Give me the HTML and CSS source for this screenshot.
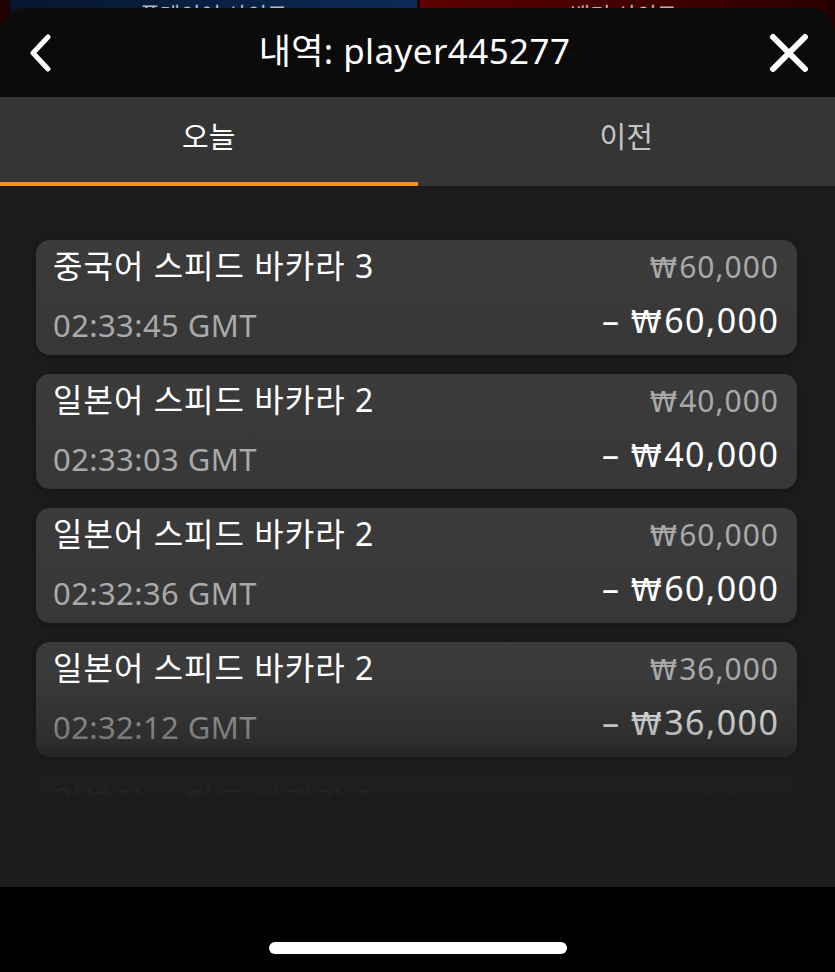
FILE: index.html
```html
<!DOCTYPE html>
<html lang="ko">
<head>
<meta charset="utf-8">
<title>내역</title>
<link rel="stylesheet" href="styles.css">
</head>
<body>
<div class="backdrop">
  <div class="panel panel-blue"><span>플레이어 사이드</span></div>
  <div class="panel panel-red"><span>뱅커 사이드</span></div>
</div>
<div class="modal">
  <header class="header">
    <button class="icon-btn" aria-label="뒤로">
      <svg width="24" height="38" viewBox="0 0 24 38"><path d="M20 3 L5 19 L20 35" fill="none" stroke="#fff" stroke-width="5" stroke-linecap="round" stroke-linejoin="round"/></svg>
    </button>
    <h1 class="title">내역: player445277</h1>
    <button class="icon-btn" aria-label="닫기">
      <svg width="40" height="40" viewBox="0 0 40 40"><path d="M4 4 L36 36 M36 4 L4 36" fill="none" stroke="#fff" stroke-width="6" stroke-linecap="round"/></svg>
    </button>
  </header>
  <nav class="tabs">
    <div class="tab tab-active">오늘</div>
    <div class="tab">이전</div>
  </nav>
  <section class="list">
    <div class="card">
      <div class="col">
        <div class="game">중국어 스피드 바카라 3</div>
        <div class="time">02:33:45 GMT</div>
      </div>
      <div class="col col-right">
        <div class="bet"><span class="won">₩</span>60,000</div>
        <div class="result">– <span class="won">₩</span>60,000</div>
      </div>
    </div>
    <div class="card">
      <div class="col">
        <div class="game">일본어 스피드 바카라 2</div>
        <div class="time">02:33:03 GMT</div>
      </div>
      <div class="col col-right">
        <div class="bet"><span class="won">₩</span>40,000</div>
        <div class="result">– <span class="won">₩</span>40,000</div>
      </div>
    </div>
    <div class="card">
      <div class="col">
        <div class="game">일본어 스피드 바카라 2</div>
        <div class="time">02:32:36 GMT</div>
      </div>
      <div class="col col-right">
        <div class="bet"><span class="won">₩</span>60,000</div>
        <div class="result">– <span class="won">₩</span>60,000</div>
      </div>
    </div>
    <div class="card">
      <div class="col">
        <div class="game">일본어 스피드 바카라 2</div>
        <div class="time">02:32:12 GMT</div>
      </div>
      <div class="col col-right">
        <div class="bet"><span class="won">₩</span>36,000</div>
        <div class="result">– <span class="won">₩</span>36,000</div>
      </div>
    </div>
    <div class="card">
      <div class="col">
        <div class="game">일본어 스피드 바카라 2</div>
        <div class="time">02:31:50 GMT</div>
      </div>
      <div class="col col-right">
        <div class="bet"><span class="won">₩</span>20,000</div>
        <div class="result">– <span class="won">₩</span>20,000</div>
      </div>
    </div>
    <div class="fade"></div>
  </section>
  <footer class="home-bar">
    <div class="home-indicator"></div>
  </footer>
</div>
</body>
</html>
```

FILE: styles.css
```css
* { box-sizing: border-box; }
html, body {
  margin: 0;
  padding: 0;
  width: 835px;
  height: 972px;
  overflow: hidden;
  background: #000;
  font-family: "Noto Sans", "Noto Sans CJK KR", sans-serif;
  color: #fff;
}
body { position: relative; }

.backdrop {
  position: absolute;
  top: 0;
  left: 0;
  right: 0;
  height: 60px;
  display: flex;
  gap: 3px;
  background: #200000;
  z-index: 0;
}
.panel {
  flex: 1;
  display: flex;
  justify-content: center;
  align-items: flex-start;
  overflow: hidden;
  font-size: 22px;
  line-height: 30px;
  color: rgba(255,255,255,0.7);
}
.panel span { margin-top: -1px; }
.panel-blue {
  margin-left: 10px;
  background: linear-gradient(90deg, #06162e, #0c2a58);
}
.panel-red {
  margin-right: 8px;
  background: linear-gradient(90deg, #5c0000, #2c0000);
}

.modal {
  position: relative;
  z-index: 1;
  margin-top: 8px;
  height: 964px;
  border-radius: 26px 26px 0 0;
  overflow: hidden;
  display: flex;
  flex-direction: column;
}

.header {
  height: 89px;
  background: #0b0b0b;
  display: flex;
  align-items: center;
  justify-content: space-between;
  padding: 0 26px 0 20px;
}
.icon-btn {
  background: none;
  border: 0;
  padding: 0;
  display: flex;
  align-items: center;
  justify-content: center;
  width: 40px;
  height: 44px;
}
.title {
  margin: 0;
  font-weight: 400;
  font-size: 35px;
  letter-spacing: 0.4px;
  line-height: 44px;
  margin-top: -3px;
  color: #fff;
}

.tabs {
  height: 89px;
  background: #353535;
  display: flex;
}
.tab {
  flex: 1;
  display: flex;
  align-items: center;
  justify-content: center;
  font-size: 29px;
  color: #c4c4c4;
  padding-bottom: 10px;
  border-bottom: 4px solid transparent;
}
.tab-active {
  color: #fff;
  border-bottom-color: #f7921e;
}

.list {
  position: relative;
  flex: 1;
  background: #1c1c1c;
  padding: 54px 38px 0 36px;
  display: flex;
  flex-direction: column;
  gap: 19px;
  overflow: hidden;
}
.card {
  flex: none;
  height: 115px;
  border-radius: 14px;
  background: linear-gradient(180deg, #3b3b3b, #373737);
  box-shadow: 0 2px 10px rgba(0,0,0,0.35);
  display: flex;
  justify-content: space-between;
  padding: 0 19px 0 17px;
}
.col {
  display: flex;
  flex-direction: column;
}
.col-right { align-items: flex-end; }
.game {
  font-size: 32px;
  letter-spacing: 1px;
  line-height: 40px;
  margin-top: 6px;
  color: #fff;
}
.time {
  font-size: 31px;
  line-height: 40px;
  margin-top: 19px;
  letter-spacing: 0.4px;
  color: #a9a9a9;
}
.bet {
  font-size: 30px;
  letter-spacing: 1px;
  line-height: 40px;
  margin-top: 7px;
  margin-right: -1px;
  color: #a9a9a9;
}
.result {
  font-size: 34px;
  letter-spacing: 1.5px;
  line-height: 40px;
  margin-top: 11px;
  margin-right: -1.5px;
  color: #fff;
}
.won {
  font-family: "DejaVu Sans", "Noto Sans", sans-serif;
  font-size: 0.92em;
  margin-right: 1px;
}
.fade {
  position: absolute;
  left: 0;
  right: 0;
  top: 490px;
  bottom: 0;
  background: linear-gradient(180deg, rgba(28,28,28,0) 0%, rgba(28,28,28,0.35) 30%, rgba(28,28,28,0.7) 40%, rgba(28,28,28,0.9) 48%, #1c1c1c 58%);
  pointer-events: none;
}

.home-bar {
  height: 85px;
  background: #000;
  display: flex;
  justify-content: center;
  align-items: flex-start;
  padding-top: 55px;
}
.home-indicator {
  width: 298px;
  height: 12px;
  border-radius: 6px;
  background: #fff;
}
```
